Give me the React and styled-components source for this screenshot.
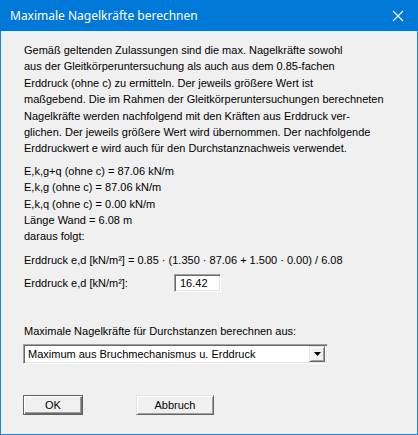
import React from 'react';
import styled, { createGlobalStyle } from 'styled-components';

const Global = createGlobalStyle`
    html, body {
        margin: 0;
        padding: 0;
        background: #f0f0f0;
    }
`;

const Window = styled.div`
    width: 418px;
    height: 435px;
    box-sizing: border-box;
    background: #f0f0f0;
    border: 1px solid #1a82d8;
    border-top: none;
    display: flex;
    flex-direction: column;
    font-family: "Liberation Sans", Arial, sans-serif;
    font-size: 11px;
    color: #000;
`;

const TitleBar = styled.div`
    height: 31px;
    margin: 0 -1px;
    background: #0078d7;
    display: flex;
    align-items: center;
    justify-content: space-between;
    padding: 0 10px 0 10px;
    color: #fff;
    font-family: "Noto Sans", "Open Sans", sans-serif;
    font-size: 12px;
`;

const Title = styled.span`
    padding-bottom: 1px;
`;

const CloseBtn = styled.svg`
    width: 12px;
    height: 12px;
    margin-right: 4px;
`;

const Body = styled.div`
    padding: 11px 0 0 22px;
    display: flex;
    flex-direction: column;
`;

const Text = styled.p`
    margin: 0 0 ${p => p.gap || 0}px 1px;
    line-height: 16.4px;
    white-space: pre;
`;

const Row = styled.div`
    display: flex;
    align-items: center;
    margin-bottom: ${p => p.gap || 0}px;
`;

const RowLabel = styled.span`
    width: 150px;
    padding-left: 1px;
`;

const Field = styled.div`
    width: 47px;
    height: 18px;
    box-sizing: border-box;
    background: #fff;
    border-top: 1px solid #a0a0a0;
    border-left: 1px solid #a0a0a0;
    border-right: 1px solid #fff;
    border-bottom: 1px solid #fff;
    box-shadow: inset 1px 1px #696969, inset -1px -1px #e3e3e3;
    padding: 2px 0 0 5px;
    line-height: 13px;
`;

const Select = styled.div`
    width: 305px;
    height: 20px;
    box-sizing: border-box;
    background: #fff;
    border-top: 1px solid #a0a0a0;
    border-left: 1px solid #a0a0a0;
    border-right: 1px solid #fff;
    border-bottom: 1px solid #fff;
    box-shadow: inset 1px 1px #696969, inset -1px -1px #e3e3e3;
    display: flex;
    align-items: center;
    justify-content: space-between;
    padding: 2px 2px 2px 4px;
`;

const ArrowBtn = styled.div`
    width: 16px;
    height: 16px;
    box-sizing: border-box;
    background: #f0f0f0;
    border-top: 1px solid #e3e3e3;
    border-left: 1px solid #e3e3e3;
    border-right: 1px solid #696969;
    border-bottom: 1px solid #696969;
    box-shadow: inset 1px 1px #fff, inset -1px -1px #a0a0a0;
    display: flex;
    align-items: center;
    justify-content: center;
`;

const Buttons = styled.div`
    display: flex;
    gap: 53px;
`;

const Button = styled.button`
    width: ${p => p.w}px;
    height: 20px;
    box-sizing: border-box;
    background: #f0f0f0;
    font-family: "Liberation Sans", Arial, sans-serif;
    font-size: 11px;
    color: #000;
    padding: 0;
    border: 1px solid ${p => p.primary ? '#646464' : '#e3e3e3'};
    border-right-color: #646464;
    border-bottom-color: #646464;
    box-shadow: ${p => p.primary
        ? 'inset 1px 1px #fff, inset -1px -1px #696969, inset -2px -2px #a0a0a0'
        : 'inset 1px 1px #fff, inset -1px -1px #a0a0a0'};
`;

const intro = [
    'Gemäß geltenden Zulassungen sind die max. Nagelkräfte sowohl',
    'aus der Gleitkörperuntersuchung als auch aus dem 0.85-fachen',
    'Erddruck (ohne c) zu ermitteln. Der jeweils größere Wert ist',
    'maßgebend. Die im Rahmen der Gleitkörperuntersuchungen berechneten',
    'Nagelkräfte werden nachfolgend mit den Kräften aus Erddruck ver-',
    'glichen. Der jeweils größere Wert wird übernommen. Der nachfolgende',
    'Erddruckwert e wird auch für den Durchstanznachweis verwendet.',
].join('\n');

const values = [
    'E,k,g+q (ohne c) = 87.06 kN/m',
    'E,k,g (ohne c) = 87.06 kN/m',
    'E,k,q (ohne c) = 0.00 kN/m',
    'Länge Wand = 6.08 m',
    'daraus folgt:',
].join('\n');

export default function App() {
    return (
        <>
            <Global />
            <Window>
                <TitleBar>
                    <Title>Maximale Nagelkräfte berechnen</Title>
                    <CloseBtn viewBox="0 0 12 12">
                        <path d="M1 1 L11 11 M11 1 L1 11" stroke="#fff" strokeWidth="1.1" fill="none" />
                    </CloseBtn>
                </TitleBar>
                <Body>
                    <Text gap={6}>{intro}</Text>
                    <Text gap={7}>{values}</Text>
                    <Text gap={6}>Erddruck e,d [kN/m²] = 0.85 · (1.350 · 87.06 + 1.500 · 0.00) / 6.08</Text>
                    <Row gap={31}>
                        <RowLabel>Erddruck e,d [kN/m²]:</RowLabel>
                        <Field>16.42</Field>
                    </Row>
                    <Text gap={4}>Maximale Nagelkräfte für Durchstanzen berechnen aus:</Text>
                    <Row gap={31}>
                        <Select>
                            <span>Maximum aus Bruchmechanismus u. Erddruck</span>
                            <ArrowBtn>
                                <svg width="7" height="4" viewBox="0 0 7 4">
                                    <path d="M0 0 H7 L3.5 4 Z" fill="#000" />
                                </svg>
                            </ArrowBtn>
                        </Select>
                    </Row>
                    <Buttons>
                        <Button primary w={60}>OK</Button>
                        <Button w={78}>Abbruch</Button>
                    </Buttons>
                </Body>
            </Window>
        </>
    );
}
